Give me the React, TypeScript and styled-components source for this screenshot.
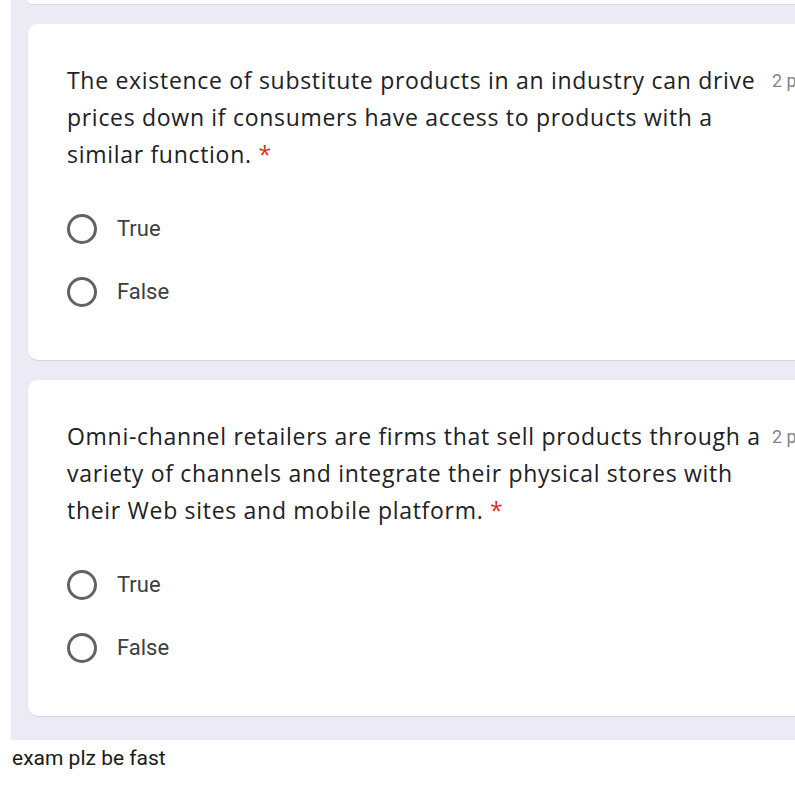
import { createGlobalStyle } from 'styled-components';
import styled from 'styled-components';

type Question = {
  text: string;
  options: string[];
};

const questions: Question[] = [
  {
    text: 'The existence of substitute products in an industry can drive prices down if consumers have access to products with a similar function.',
    options: ['True', 'False'],
  },
  {
    text: 'Omni-channel retailers are firms that sell products through a variety of channels and integrate their physical stores with their Web sites and mobile platform.',
    options: ['True', 'False'],
  },
];

const App = (): JSX.Element => {
  return (
    <>
      <GlobalStyle />
      <FormArea>
        <CardStub />
        {questions.map((q) => (
          <Card key={q.text}>
            <Header>
              <QuestionText>
                {q.text} <Required>*</Required>
              </QuestionText>
              <Points>2 p</Points>
            </Header>
            <Options>
              {q.options.map((opt) => (
                <Option key={opt}>
                  <Radio />
                  <OptionLabel>{opt}</OptionLabel>
                </Option>
              ))}
            </Options>
          </Card>
        ))}
      </FormArea>
      <Caption>exam plz be fast</Caption>
    </>
  );
};

const GlobalStyle = createGlobalStyle`
  body {
    margin: 0;
    background: #ffffff;
    font-family: Roboto, 'Liberation Sans', sans-serif;
  }
`;

const FormArea = styled.main`
  display: flex;
  flex-direction: column;
  gap: 20px;
  margin-left: 11px;
  height: 740px;
  padding-left: 17px;
  background-color: #ebeaf5;
  overflow: hidden;
`;

const CardStub = styled.div`
  flex: none;
  width: 800px;
  height: 4px;
  background-color: #ffffff;
  border-radius: 0 0 0 10px;
  box-shadow: 0 1px 1px rgba(0, 0, 0, 0.08);
`;

const Card = styled.section`
  flex: none;
  width: 800px;
  height: 336px;
  box-sizing: border-box;
  padding: 38px 0 0 39px;
  background-color: #ffffff;
  border-radius: 10px 0 0 10px;
  box-shadow: 0 1px 1px rgba(0, 0, 0, 0.1);
`;

const Header = styled.div`
  display: flex;
  align-items: flex-start;
  gap: 6px;
`;

const QuestionText = styled.p`
  margin: 0;
  width: 699px;
  flex: none;
  font-family: 'Open Sans', Roboto, sans-serif;
  font-size: 23px;
  letter-spacing: 0.7px;
  line-height: 37px;
  color: #202124;
`;

const Required = styled.span`
  color: #d93025;
`;

const Points = styled.span`
  flex: none;
  font-size: 18px;
  line-height: 37px;
  color: #80868b;
`;

const Options = styled.div`
  display: flex;
  flex-direction: column;
  margin-top: 24px;
`;

const Option = styled.label`
  display: flex;
  align-items: center;
  gap: 20px;
  height: 63px;
`;

const Radio = styled.span`
  width: 24px;
  height: 24px;
  border: 3px solid #5f6368;
  border-radius: 50%;
`;

const OptionLabel = styled.span`
  font-size: 22px;
  color: #3c4043;
`;

const Caption = styled.p`
  margin: 6px 0 0 12px;
  font-size: 21px;
  line-height: 24px;
  color: #1a1a1a;
`;

export default App;
